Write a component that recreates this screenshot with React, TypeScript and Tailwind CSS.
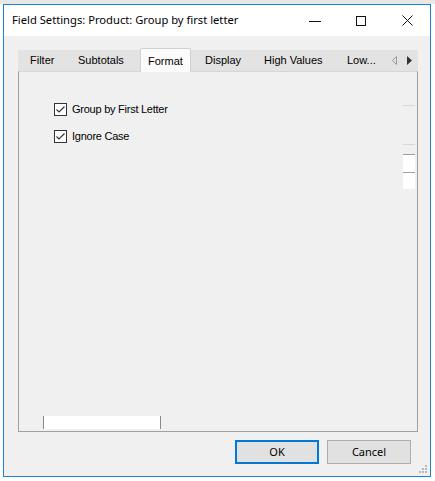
import React from "react";

const tabs = [
  { label: "Filter", w: "w-[50px]", pl: "pl-[12px]" },
  { label: "Subtotals", w: "w-[72px]", pl: "pl-[10px]" },
  { label: "Format", w: "w-[51px]", pl: "pl-[7px]", active: true },
  { label: "Display", w: "w-[63px]", pl: "pl-[14px]" },
  { label: "High Values", w: "w-[82px]", pl: "pl-[10px]" },
  { label: "Low...", w: "w-[52px]", pl: "pl-[11px]" },
];

function CheckBox({ label }: { label: string }) {
  return (
    <div className="flex items-center h-[13px]">
      <div className="w-[13px] h-[13px] border border-[#333333] bg-white flex items-center justify-center">
        <svg width="11" height="11" viewBox="0 0 11 11">
          <path d="M1.5 5.5 L4 8 L9.5 2.5" fill="none" stroke="#333333" strokeWidth="1.2" />
        </svg>
      </div>
      <span className="ml-[5px] text-[11px] tracking-[-0.25px] text-black leading-none">{label}</span>
    </div>
  );
}

export default function App() {
  return (
    <div className="w-[435px] h-[481px] bg-white" style={{ fontFamily: '"Liberation Sans", Arial, sans-serif' }}>
      <div className="h-[4px] bg-[#e8e8e8]" />
      <div className="ml-[3px] w-[428px] h-[473px] border border-[#1883d7] flex flex-col">
        {/* Title bar */}
        <div className="h-[31px] bg-white flex items-center shrink-0">
          <span className="ml-[8px] text-[11.2px] text-black" style={{ fontFamily: '"Noto Sans", sans-serif' }}>
            Field Settings: Product: Group by first letter
          </span>
          <div className="ml-auto flex h-full">
            <div className="w-[46px] flex items-center justify-center">
              <svg width="12" height="12" viewBox="0 0 12 12"><path d="M0 6.5 H12" stroke="#111" strokeWidth="1" /></svg>
            </div>
            <div className="w-[46px] flex items-center justify-center">
              <svg width="10" height="10" viewBox="0 0 10 10"><rect x="0.5" y="0.5" width="9" height="9" fill="none" stroke="#111" strokeWidth="1" /></svg>
            </div>
            <div className="w-[46px] flex items-center justify-center">
              <svg width="11" height="11" viewBox="0 0 11 11"><path d="M0.5 0.5 L10.5 10.5 M10.5 0.5 L0.5 10.5" stroke="#111" strokeWidth="1" /></svg>
            </div>
          </div>
        </div>

        {/* Body */}
        <div className="flex-1 bg-[#f0f0f0] flex flex-col pt-[14px] pl-[14px] pr-[12px] relative">
          {/* Tab strip */}
          <div className="h-[21px] w-[400px] bg-[#e3e3e3] flex text-[11px] text-black">
            {tabs.map((t) =>
              t.active ? (
                <div
                  key={t.label}
                  className={`${t.w} ${t.pl} relative z-10 -mt-[2px] h-[24px] bg-[#fbfbfb] border border-b-0 border-[#d0d0d0] rounded-t-[2px] flex items-center pt-[1px]`}
                >
                  {t.label}
                </div>
              ) : (
                <div key={t.label} className={`${t.w} ${t.pl} h-full flex items-center`}>
                  {t.label}
                </div>
              )
            )}
            <div className="flex-1 flex items-center justify-end gap-[10px] pr-[6px]">
              <svg width="5" height="9" viewBox="0 0 5 9"><path d="M4.5 0.5 L0.5 4.5 L4.5 8.5 Z" fill="none" stroke="#9a9a9a" strokeWidth="1" /></svg>
              <svg width="5" height="9" viewBox="0 0 5 9"><path d="M0 0 L5 4.5 L0 9 Z" fill="#333" /></svg>
            </div>
          </div>

          {/* Tab panel */}
          <div className="w-[400px] h-[361px] border border-[#a0a0a0] border-t-[#d6d6d6] bg-[#f0f0f0] flex flex-col">
            <div className="flex flex-1">
              <div className="flex-1 flex flex-col gap-[14px] pl-[35px] pt-[31px]">
                <CheckBox label="Group by First Letter" />
                <CheckBox label="Ignore Case" />
              </div>
              <div className="w-[12px] mr-[2px] flex flex-col pt-[33px]">
                <div className="h-[1px] bg-[#d8d8d8]" />
                <div className="h-[1px] bg-[#d8d8d8] mt-[38px]" />
                <div className="h-[18px] bg-white border-t border-[#a0a0a0] mt-[9px]" />
                <div className="h-[17px] bg-white border-t border-[#a0a0a0]" />
              </div>
            </div>
            <div className="ml-[24px] mb-[2px] w-[118px] h-[13px] bg-white border-l border-r border-[#888888]" />
          </div>

          {/* Buttons */}
          <div className="flex justify-end gap-[8px] mt-[8px] pr-[7px] text-[11px] text-black" style={{ fontFamily: '"Noto Sans", sans-serif' }}>
            <div className="w-[84px] h-[24px] bg-[#e1e1e1] border-2 border-[#0078d7] flex items-center justify-center">OK</div>
            <div className="w-[84px] h-[24px] bg-[#e1e1e1] border border-[#adadad] flex items-center justify-center">Cancel</div>
          </div>

          {/* Size grip */}
          <div className="absolute right-[2px] bottom-[2px]">
            <svg width="9" height="9" viewBox="0 0 9 9" fill="#b8b8b8">
              <rect x="6" y="0" width="2" height="2" />
              <rect x="3" y="3" width="2" height="2" />
              <rect x="6" y="3" width="2" height="2" />
              <rect x="0" y="6" width="2" height="2" />
              <rect x="3" y="6" width="2" height="2" />
              <rect x="6" y="6" width="2" height="2" />
            </svg>
          </div>
        </div>
      </div>
    </div>
  );
}
